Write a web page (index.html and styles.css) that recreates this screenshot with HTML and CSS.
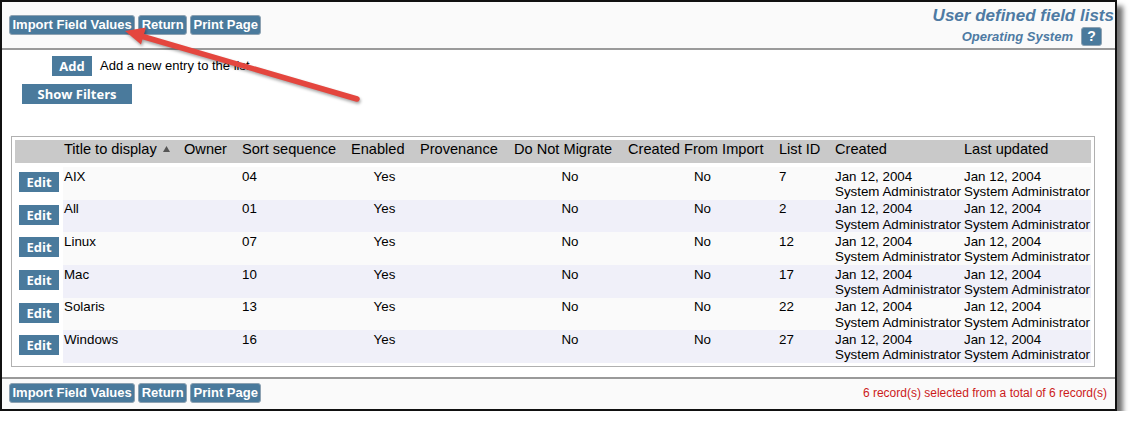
FILE: index.html
```html
<!DOCTYPE html>
<html>
<head>
<meta charset="utf-8">
<link rel="stylesheet" href="styles.css">
</head>
<body>
<div class="win">
  <div class="hdr">
    <div class="tools">
      <span class="tbtn">Import Field Values</span>
      <span class="tbtn">Return</span>
      <span class="tbtn">Print Page</span>
    </div>
    <div class="titles">
      <div class="title">User defined field lists</div>
      <div class="sub"><span>Operating System</span><span class="qbtn">?</span></div>
    </div>
  </div>
  <div class="main">
    <div class="addrow"><span class="fbtn add">Add</span><span class="addtxt">Add a new entry to the list</span></div>
    <div class="fbtn filters">Show Filters</div>
    <div class="tablewrap">
      <table class="grid">
        <colgroup>
          <col class="c-edit"><col class="c-title"><col class="c-owner"><col class="c-sort"><col class="c-en"><col class="c-prov"><col class="c-dnm"><col class="c-cfi"><col class="c-id"><col class="c-cr"><col class="c-up">
        </colgroup>
        <thead>
          <tr>
            <th></th>
            <th>Title to display<svg class="sorticon" width="7" height="6" viewBox="0 0 7 6"><polygon points="3.5,0 7,6 0,6" fill="#555"/></svg></th>
            <th>Owner</th>
            <th>Sort sequence</th>
            <th>Enabled</th>
            <th>Provenance</th>
            <th>Do Not Migrate</th>
            <th>Created From Import</th>
            <th>List ID</th>
            <th>Created</th>
            <th>Last updated</th>
          </tr>
        </thead>
        <tbody>
          <tr><td class="ec"><span class="fbtn edit">Edit</span></td><td>AIX</td><td></td><td>04</td><td class="ctr">Yes</td><td></td><td class="ctr">No</td><td class="ctr">No</td><td>7</td><td>Jan 12, 2004<br>System Administrator</td><td>Jan 12, 2004<br>System Administrator</td></tr>
          <tr><td class="ec"><span class="fbtn edit">Edit</span></td><td>All</td><td></td><td>01</td><td class="ctr">Yes</td><td></td><td class="ctr">No</td><td class="ctr">No</td><td>2</td><td>Jan 12, 2004<br>System Administrator</td><td>Jan 12, 2004<br>System Administrator</td></tr>
          <tr><td class="ec"><span class="fbtn edit">Edit</span></td><td>Linux</td><td></td><td>07</td><td class="ctr">Yes</td><td></td><td class="ctr">No</td><td class="ctr">No</td><td>12</td><td>Jan 12, 2004<br>System Administrator</td><td>Jan 12, 2004<br>System Administrator</td></tr>
          <tr><td class="ec"><span class="fbtn edit">Edit</span></td><td>Mac</td><td></td><td>10</td><td class="ctr">Yes</td><td></td><td class="ctr">No</td><td class="ctr">No</td><td>17</td><td>Jan 12, 2004<br>System Administrator</td><td>Jan 12, 2004<br>System Administrator</td></tr>
          <tr><td class="ec"><span class="fbtn edit">Edit</span></td><td>Solaris</td><td></td><td>13</td><td class="ctr">Yes</td><td></td><td class="ctr">No</td><td class="ctr">No</td><td>22</td><td>Jan 12, 2004<br>System Administrator</td><td>Jan 12, 2004<br>System Administrator</td></tr>
          <tr><td class="ec"><span class="fbtn edit">Edit</span></td><td>Windows</td><td></td><td>16</td><td class="ctr">Yes</td><td></td><td class="ctr">No</td><td class="ctr">No</td><td>27</td><td>Jan 12, 2004<br>System Administrator</td><td>Jan 12, 2004<br>System Administrator</td></tr>
        </tbody>
      </table>
    </div>
  </div>
  <div class="ftr">
    <div class="tools ftools">
      <span class="tbtn">Import Field Values</span>
      <span class="tbtn">Return</span>
      <span class="tbtn">Print Page</span>
    </div>
    <div class="count">6 record(s) selected from a total of 6 record(s)</div>
  </div>
</div>
<svg class="arrow" width="380" height="115" viewBox="0 0 380 115">
  <line x1="141" y1="36" x2="357" y2="99" stroke="#e4463e" stroke-width="5.5" stroke-linecap="round"/>
  <polygon points="125,31 146,27.5 141,44.5" fill="#e4463e"/>
</svg>
</body>
</html>
```
FILE: styles.css
```css
html, body {
  margin: 0;
  padding: 0;
  background: #ffffff;
}
body {
  position: relative;
  font-family: "Liberation Sans", Arial, sans-serif;
  color: #000;
}
.win {
  width: 1117px;
  height: 411px;
  box-sizing: border-box;
  border: 2px solid #111;
  background: #fff;
  box-shadow: 6px 6px 5px rgba(0, 0, 0, 0.55);
  display: flex;
  flex-direction: column;
}
.hdr {
  height: 46px;
  flex: none;
  background: #fafafa;
  border-bottom: 2px solid #9a9a9a;
  display: flex;
  justify-content: space-between;
}
.tools {
  display: flex;
  gap: 3px;
  align-items: flex-start;
  padding: 13px 0 0 7px;
}
.tbtn {
  display: block;
  height: 20px;
  box-sizing: border-box;
  border: 1px solid #8ea2b2;
  border-radius: 3px;
  background: #4a7a9c;
  color: #fff;
  font: bold 13px/18px "Liberation Sans", Arial, sans-serif;
  padding: 0 2.5px;
  white-space: nowrap;
}
.titles {
  display: flex;
  flex-direction: column;
  align-items: flex-end;
  padding-right: 1px;
}
.title {
  font: italic bold 17px/20px "Liberation Sans", Arial, sans-serif;
  color: #4e7aa3;
  margin-top: 4px;
}
.sub {
  display: flex;
  align-items: center;
  gap: 8px;
  margin: 1px 12px 0 0;
  font: italic bold 13px/18px "Liberation Sans", Arial, sans-serif;
  color: #4e7aa3;
}
.qbtn {
  display: block;
  width: 21px;
  height: 19px;
  box-sizing: border-box;
  border: 1px solid #8ea2b2;
  border-radius: 3px;
  background: #4a7a9c;
  color: #fff;
  font: bold 14px/17px "Liberation Sans", Arial, sans-serif;
  text-align: center;
}
.main {
  flex: 1;
  padding-top: 6px;
  background: #fff;
}
.addrow {
  display: flex;
  align-items: center;
  gap: 8px;
  margin-left: 50px;
}
.fbtn {
  display: block;
  height: 20px;
  background: #4a7a9c;
  color: #fff;
  font: bold 13px/20px "Open Sans", sans-serif;
  text-align: center;
}
.add {
  width: 40px;
}
.addtxt {
  font-size: 13px;
  line-height: 20px;
}
.filters {
  width: 110px;
  margin: 8px 0 0 20px;
}
.tablewrap {
  width: 1084px;
  box-sizing: border-box;
  margin: 32px 0 0 9px;
  border: 1px solid #b0b0b0;
  padding: 3px;
}
.grid {
  width: 1076px;
  table-layout: fixed;
  border-collapse: separate;
  border-spacing: 0;
}
.c-edit { width: 48px; }
.c-title { width: 120px; }
.c-owner { width: 58px; }
.c-sort { width: 109px; }
.c-en { width: 69px; }
.c-prov { width: 94px; }
.c-dnm { width: 114px; }
.c-cfi { width: 151px; }
.c-id { width: 56px; }
.c-cr { width: 129px; }
.c-up { width: 128px; }
.grid th {
  background: #c9c9c9;
  border-bottom: 4px solid #fff;
  padding: 1px 0 0 1px;
  vertical-align: top;
  text-align: left;
  font-weight: normal;
  font-size: 14.6px;
  line-height: 17px;
  white-space: nowrap;
  height: 22px;
}
.sorticon {
  margin: 0 0 3px 6px;
  vertical-align: middle;
}
.grid tbody tr {
  height: 32.7px;
}
.grid td {
  padding: 1.5px 0 0 1px;
  vertical-align: top;
  font-size: 13.35px;
  line-height: 15.5px;
  white-space: nowrap;
}
.grid tbody tr:nth-child(odd) td { background: #fafafa; }
.grid tbody tr:nth-child(even) td { background: #f0f0f9; }
.grid tbody tr td.ec {
  background: #fff;
  padding: 5px 0 0 4px;
}
.edit {
  width: 40px;
}
.grid td.ctr {
  text-align: center;
  padding-left: 0;
}
.ftr {
  height: 30px;
  flex: none;
  background: #fafafa;
  border-top: 2px solid #9a9a9a;
  display: flex;
  justify-content: space-between;
  align-items: flex-start;
}
.ftools {
  padding-top: 4px;
}
.count {
  color: #cc1a1a;
  font-size: 12px;
  line-height: 20px;
  padding: 4px 8px 0 0;
}
.arrow {
  position: absolute;
  left: 0;
  top: 0;
  pointer-events: none;
  filter: drop-shadow(1.5px 2px 1.5px rgba(0, 0, 0, 0.35));
}
```
